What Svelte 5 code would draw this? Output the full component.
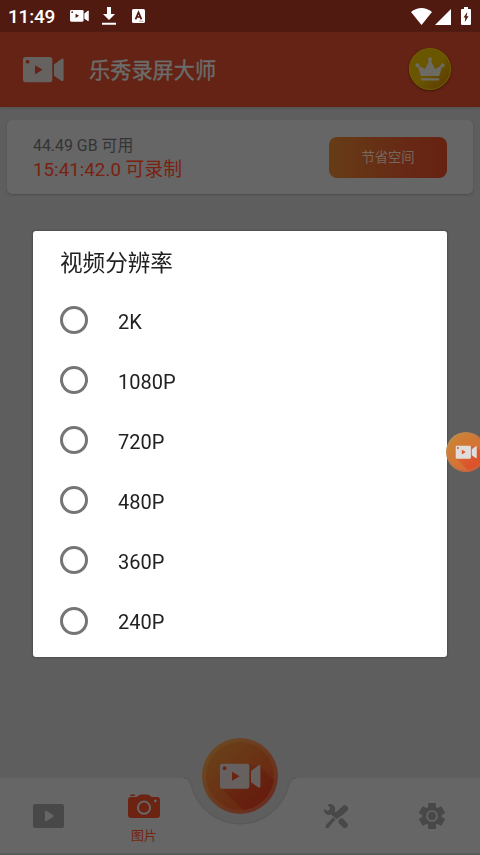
<script>
  let selected = $state(null);
  const resolutions = ['2K', '1080P', '720P', '480P', '360P', '240P'];

  const dimmed = {
    id: 'dimmed', from: '#6a3e18', to: '#6a2711', shade: '#661f0e',
    ringFrom: '#6b4720', ringTo: '#6a2e20', body: '#66615e', mark: '#6b2413'
  };
  const bright = {
    id: 'bright', from: '#cd8134', to: '#d96b35', shade: '#dc5229',
    ringFrom: '#c08a48', ringTo: '#c9603c', body: '#dfdedd', mark: '#e0552e'
  };
</script>

<!-- Video camera, shared by all the places that show it -->
{#snippet camera(cls, body, mark)}
  <svg class={cls} viewBox="0 0 41 26">
    <path fill={body} d="M2.5 0H26.5Q29.3 0 29.3 2.5V23Q29.3 25.3 26.8 25.3H2.5Q0 25.3 0 23V2.5Q0 0 2.5 0Z" />
    <path fill={body} d="M31 7.5L38.6 1.7Q40.6 .8 40.6 2.8V22.8Q40.6 24.8 38.6 24.1L31 18.8Z" />
    <circle cx="4.6" cy="4.7" r="1.9" fill={mark} />
    <path fill={mark} d="M12 8.3L19.6 12.7L12 17.2Z" />
  </svg>
{/snippet}

<!-- Round record button with the long shadow of the camera -->
{#snippet record(cls, c)}
  <svg class={cls} viewBox="0 0 76 76">
    <defs>
      <linearGradient id="{c.id}-disc" x1="0.15" y1="0.15" x2="0.8" y2="0.8">
        <stop offset="0" stop-color={c.from} />
        <stop offset="1" stop-color={c.to} />
      </linearGradient>
      <linearGradient id="{c.id}-ring" x1="0.15" y1="0.15" x2="0.85" y2="0.85">
        <stop offset="0" stop-color={c.ringFrom} />
        <stop offset="1" stop-color={c.ringTo} />
      </linearGradient>
      <linearGradient id="{c.id}-shade" x1="0.2" y1="0.2" x2="0.65" y2="0.65">
        <stop offset="0" stop-color={c.shade} stop-opacity="0.3" />
        <stop offset="1" stop-color={c.shade} />
      </linearGradient>
      <clipPath id="{c.id}-clip"><circle cx="38" cy="38" r="34" /></clipPath>
    </defs>
    <circle cx="38" cy="38" r="38" fill="url(#{c.id}-ring)" />
    <circle cx="38" cy="38" r="34" fill="url(#{c.id}-disc)" />
    <path clip-path="url(#{c.id}-clip)" fill="url(#{c.id}-shade)" d="M19 50L48 26L58 28L76 46V76H45Z" />
    <svg x="18" y="25.5" width="41" height="26" viewBox="0 0 41 26">
      <path fill={c.body} d="M2.5 0H26.5Q29.3 0 29.3 2.5V23Q29.3 25.3 26.8 25.3H2.5Q0 25.3 0 23V2.5Q0 0 2.5 0Z" />
      <path fill={c.body} d="M31 7.5L38.6 1.7Q40.4 .8 40.4 2.8V22.8Q40.4 24.8 38.6 24.1L31 18.8Z" />
      <circle cx="4.6" cy="4.7" r="1.9" fill={c.mark} />
      <path fill={c.mark} d="M12 8.3L19.6 12.7L12 17.2Z" />
    </svg>
  </svg>
{/snippet}

<div class="screen">
  <div class="status">
    <span class="clock">11:49</span>
    {@render camera('status-camera', '#fff', '#501a10')}
    <svg class="download" width="14" height="18" viewBox="0 0 14 18" fill="#fff">
      <path d="M5 0H9V7H13L7 13L1 7H5ZM0 15.7H14V17.7H0Z" />
    </svg>
    <svg class="letter" width="13" height="14" viewBox="0 0 13 14">
      <rect width="13" height="14" rx="1.6" fill="#fff" />
      <path d="M3.5 10.3L6.5 3.4L9.5 10.3M4.6 8H8.4" stroke="#501a10" stroke-width="1.7" fill="none" />
      <path d="M7 12.2H11.5" stroke="#b99c96" />
    </svg>
    <div class="signals">
      <svg width="21" height="17" viewBox="0 0 21 17" fill="#fff">
        <path d="M0 4Q10.5-3.8 21 4L10.5 17Z" />
      </svg>
      <svg class="cell" width="16" height="16" viewBox="0 0 16 16" fill="#fff">
        <path d="M16 0V16H0Z" />
      </svg>
      <svg class="battery" width="10" height="18" viewBox="0 0 10 18">
        <path fill="#fff" d="M3 0H7V2H9Q10 2 10 3V17Q10 18 9 18H1Q0 18 0 17V3Q0 2 1 2H3Z" />
        <path fill="#501a10" d="M6.3 5L2.5 10.5H4.3L3.8 15L7.6 9.3H5.6Z" />
      </svg>
    </div>
  </div>

  <header>
    {@render camera('logo', '#666260', '#642314')}
    <h1>乐秀录屏大师</h1>
    <div class="crown">
      <svg width="30" height="25" viewBox="0 0 30 25" fill="#6c6a62">
        <circle cx="15" cy="2.3" r="2" />
        <circle cx="2.4" cy="8.2" r="2" />
        <circle cx="27.6" cy="8.2" r="2" />
        <path d="M2.5 8L10 12L15 2L20 12L27.5 8L24.3 19H5.7Z" />
        <rect x="5.7" y="21.2" width="18.6" height="2.4" rx="1" />
      </svg>
    </div>
  </header>

  <section class="storage">
    <div>
      <p class="free">44.49 GB 可用</p>
      <p class="time">15:41:42.0 可录制</p>
    </div>
    <button class="save">节省空间</button>
  </section>

  <nav>
    <svg class="nav-shape" width="480" height="77" viewBox="0 0 480 77">
      <path fill="#666" d="M0 0H183C189 0 190 4 192 10A50 50 0 0 0 288 10C290 4 291 0 297 0H480V77H0Z" />
      <path fill="none" stroke="#575757" d="M183 0C189 0 190 4 192 10A50 50 0 0 0 288 10C290 4 291 0 297 0" />
      <rect y="75" width="480" height="2" fill="#5b5b5b" />
    </svg>
    <div class="tab">
      <svg width="31" height="24" viewBox="0 0 31 24">
        <rect width="31" height="24" rx="2.5" fill="#484848" />
        <path d="M13 7.8L19.5 12L13 16.2Z" fill="#666" stroke="#666" stroke-width="2.2" stroke-linejoin="round" />
      </svg>
    </div>
    <div class="tab active">
      <svg width="32" height="25" viewBox="0 0 32 25">
        <path fill="#6c2312" d="M2.3 .6H7V2H2.3ZM3 3H8.5L11 1.2Q12 .4 13.5 .4H19Q20.5 .4 21.5 1.2L23.5 3H29Q32 3 32 6V21Q32 24 29 24H3Q0 24 0 21V6Q0 3 3 3Z" />
        <circle cx="16" cy="13.7" r="6.1" fill="none" stroke="#666" stroke-width="2" />
        <circle cx="27.3" cy="7" r="1.4" fill="#666" />
      </svg>
      <span>图片</span>
    </div>
    <div class="tab">
      {@render record('record', dimmed)}
    </div>
    <div class="tab">
      <svg width="26" height="26" viewBox="0 0 26 26">
        <path fill="#484848" d="M.8 6L5 8Q7 6.7 7.2 4.8L4.2 1.7Q9-.5 11.5 3.6Q12.5 6 11.8 8.2L14 10.5L10.5 14L8.2 11.6Q5 12.8 2.7 10.8Q.8 9 .8 6Z" />
        <path stroke="#484848" stroke-width="6" stroke-linecap="round" d="M18.5 18.5L21.8 22" />
        <path stroke="#484848" stroke-width="6.4" stroke-linecap="round" d="M14.5 12.2L21.8 5.6" />
        <path fill="#484848" d="M11 12L14.5 15.5L10.5 18.6L5.2 25L2.5 24.7L3 22L8.8 16Z" />
        <path stroke="#666" stroke-width="1.1" d="M9.8 13.4L13.2 16.8M13.5 17.2L18.3 13.2" />
      </svg>
    </div>
    <div class="tab">
      <svg width="26" height="26" viewBox="0 0 26 26">
        <g fill="#484848">
          <circle cx="13" cy="13" r="9.7" />
          {#each [0, 60, 120] as angle}
            <rect x="9" y="0" width="8" height="26" rx="1" transform="rotate({angle} 13 13)" />
          {/each}
        </g>
        <circle cx="13" cy="13" r="5" fill="none" stroke="#666" stroke-width="1.7" />
      </svg>
    </div>
  </nav>
</div>

<div class="overlay">
  <div class="dialog">
    <h2>视频分辨率</h2>
    {#each resolutions as item}
      <label>
        <input type="radio" name="resolution" value={item} bind:group={selected} />
        <span>{item}</span>
      </label>
    {/each}
  </div>
</div>

<!-- Floating record bubble, half outside the screen -->
<div class="bubble">
  {@render record('bubble-record', bright)}
</div>

<style>
  :global(body) {
    overflow: hidden;
  }
  .screen {
    display: flex;
    flex-direction: column;
    width: 480px;
    height: 855px;
    background: #5e5e5e;
    font-family: Roboto, 'Noto Sans CJK SC', sans-serif;
  }
  h1,
  h2,
  p {
    margin: 0;
    font-weight: 400;
  }
  svg {
    display: block;
    flex-shrink: 0;
  }
  .status {
    display: flex;
    align-items: center;
    height: 32px;
    box-sizing: border-box;
    padding: 0 8px;
    background: #501a10;
  }
  .clock {
    width: 62px;
    padding-top: 1px;
    color: #fff;
    font-size: 19px;
    font-weight: 500;
    letter-spacing: -0.2px;
    line-height: 32px;
  }
  .status-camera {
    width: 19px;
    height: 12px;
  }
  .download {
    margin-left: 13px;
  }
  .letter {
    margin-left: 16px;
  }
  .signals {
    display: flex;
    align-items: center;
    margin-left: auto;
  }
  .cell {
    margin-left: 3px;
    margin-top: 1px;
  }
  .battery {
    margin-left: 10px;
    margin-right: 1px;
  }
  header {
    display: flex;
    align-items: center;
    height: 75px;
    box-sizing: border-box;
    padding: 0 29px 0 23px;
    background: #642314;
    box-shadow: 0 1px 2px #505050;
  }
  .logo {
    width: 41px;
    height: 26px;
  }
  h1 {
    margin-left: 25px;
    padding-bottom: 3px;
    color: #6b6c6b;
    font-size: 21.2px;
    -webkit-text-stroke: 0.4px #6b6c6b;
  }
  .crown {
    display: flex;
    align-items: center;
    justify-content: center;
    width: 42px;
    height: 42px;
    margin-left: auto;
    margin-bottom: 1px;
    box-sizing: border-box;
    border: 1px solid #706000;
    border-radius: 50%;
    background: linear-gradient(135deg, #6b5600 50%, #604400 80%);
    box-shadow: 0 1px 2px #3b180c;
  }
  .storage {
    display: flex;
    align-items: center;
    justify-content: space-between;
    height: 74px;
    margin: 13px 7px 0;
    box-sizing: border-box;
    padding: 0 26px;
    border-radius: 5px;
    background: #666;
    box-shadow: 0 1px 2px #4d4d4d;
  }
  .free {
    padding-top: 2px;
    color: #343434;
    font-size: 15.9px;
    line-height: 24px;
  }
  .time {
    color: #7a2110;
    font-size: 18.8px;
    line-height: 24px;
  }
  .save {
    width: 118px;
    height: 41px;
    padding: 0 0 1px;
    border: 0;
    border-radius: 8px;
    background: linear-gradient(90deg, #663c16, #672815 68%, #662211);
    color: #77675e;
    font-family: inherit;
    font-size: 13.3px;
  }
  nav {
    position: relative;
    display: flex;
    height: 77px;
    margin-top: auto;
  }
  .nav-shape {
    position: absolute;
    inset: 0;
    overflow: visible;
  }
  .tab {
    position: relative;
    display: flex;
    flex-direction: column;
    align-items: center;
    justify-content: center;
    width: 96px;
    height: 76px;
  }
  .active {
    justify-content: flex-start;
    box-sizing: border-box;
    padding-top: 16px;
    color: #762310;
    font-size: 13px;
  }
  .active span {
    margin-top: 7px;
    line-height: 20px;
  }
  .record {
    width: 76px;
    height: 76px;
    margin-top: -81px;
  }
  .overlay {
    position: fixed;
    inset: 0;
    display: flex;
    justify-content: center;
    align-items: flex-start;
    width: 480px;
    font-family: Roboto, 'Noto Sans CJK SC', sans-serif;
  }
  .dialog {
    width: 414px;
    height: 426px;
    margin-top: 231px;
    box-sizing: border-box;
    padding: 12px 27px 0;
    border-radius: 3px;
    background: #fff;
    box-shadow: 0 0 2px #303030;
  }
  h2 {
    height: 47px;
    color: #212121;
    font-size: 22.6px;
    line-height: 42px;
  }
  label {
    display: flex;
    align-items: center;
    height: 60.1px;
    color: #212121;
    font-size: 20px;
  }
  label span {
    padding-top: 3px;
  }
  input {
    appearance: none;
    width: 28px;
    height: 28px;
    margin: 0 30px 0 0;
    box-sizing: border-box;
    border: 3px solid #757575;
    border-radius: 50%;
  }
  input:checked {
    border-width: 8px;
  }
  .bubble {
    position: absolute;
    top: 432px;
    left: 446px;
    width: 34px;
    height: 40px;
    overflow: hidden;
  }
  .bubble-record {
    width: 40px;
    height: 40px;
  }
</style>
